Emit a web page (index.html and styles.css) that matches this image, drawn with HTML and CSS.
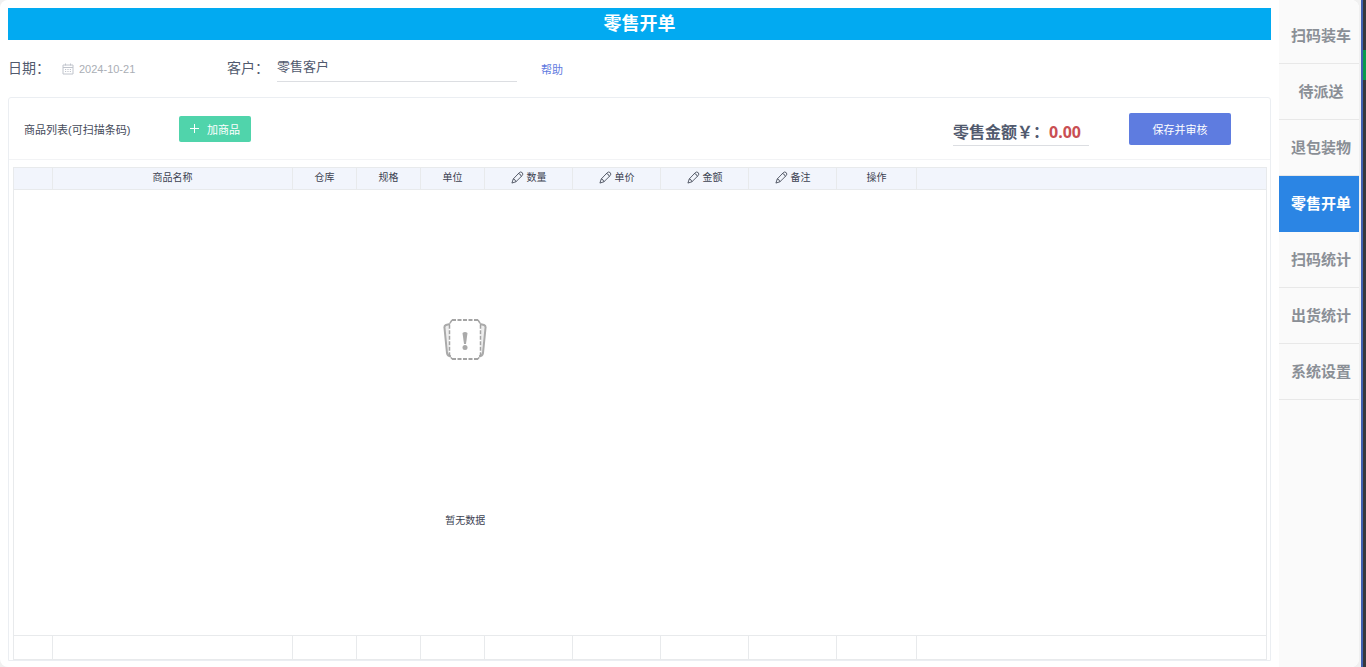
FILE: index.html
```html
<!DOCTYPE html>
<html lang="zh-CN">
<head>
<meta charset="utf-8">
<title>零售开单</title>
<link rel="stylesheet" href="styles.css">
</head>
<body>
<svg class="defs" width="0" height="0" aria-hidden="true">
  <symbol id="pen" viewBox="0 0 14 14">
    <path d="M1 13 2.400 8.600 8.800 1.900Q10.400 .3 12 1.700 13.600 3.300 12 5L5.300 11.600ZM8 2.800Q10.500 3 11 5.800M2.400 8.600Q4.800 9 5.300 11.600" fill="none" stroke="currentColor" stroke-width=".9" stroke-linejoin="round"/>
  </symbol>
</svg>
<div class="screen">
  <div class="window">
    <main class="main">
      <h1 class="title">零售开单</h1>
      <form class="filters">
        <label class="label" for="date">日期：</label>
        <span class="date-box">
          <svg width="12" height="12" viewBox="0 0 12 12" fill="none" stroke="#c0c4cc" aria-hidden="true"><path d="M1 2h10v9H1zM1 4.500h10M3.500 .5v2M8.500 .5v2"/><path d="M3 6.500h6M3 8.500h6" stroke-dasharray="1.200 1.200"/></svg>
          <input class="date" id="date" type="text" value="2024-10-21">
        </span>
        <label class="label" for="customer">客户：</label>
        <input class="customer" id="customer" type="text" value="零售客户">
        <a class="help" href="#">帮助</a>
      </form>
      <section class="card">
        <header class="card-head">
          <h2 class="card-title">商品列表(可扫描条码)</h2>
          <button class="add" type="button"><svg width="9" height="9" viewBox="0 0 9 9" stroke="#fff" aria-hidden="true"><path d="M4.500 0v9M0 4.500h9"/></svg>加商品</button>
          <div class="total">零售金额￥：<span class="amount">0.00</span></div>
          <button class="save" type="button">保存并审核</button>
        </header>
        <div class="table-wrap">
          <table class="goods">
            <colgroup>
              <col class="c-index"><col class="c-name"><col class="c-short"><col class="c-short"><col class="c-short"><col class="c-edit"><col class="c-edit"><col class="c-edit"><col class="c-edit"><col class="c-action"><col>
            </colgroup>
            <thead>
              <tr>
                <th></th><th>商品名称</th><th>仓库</th><th>规格</th><th>单位</th>
                <th><span class="edit"><svg width="13" height="13" aria-hidden="true"><use href="#pen"/></svg>数量</span></th>
                <th><span class="edit"><svg width="13" height="13" aria-hidden="true"><use href="#pen"/></svg>单价</span></th>
                <th><span class="edit"><svg width="13" height="13" aria-hidden="true"><use href="#pen"/></svg>金额</span></th>
                <th><span class="edit"><svg width="13" height="13" aria-hidden="true"><use href="#pen"/></svg>备注</span></th>
                <th>操作</th><th></th>
              </tr>
            </thead>
            <tbody>
              <tr>
                <td class="blank" colspan="10">
                  <div class="empty">
                    <svg width="44" height="44" viewBox="0 0 44 44" fill="none" aria-hidden="true">
                      <path d="M7 6 3 7Q1 8 1.500 10L4 35Q4.500 38 8 38.500M37 6 41 7Q43 8 42.500 10L40 35Q39.500 38 36 38.500" fill="#eee" stroke="#aaa" stroke-width="2"/>
                      <path d="M9 2H35V5L38 8V36L35 38V41H9V38L6 36V8L9 5Z" fill="#fff"/>
                      <path d="M9 2H35M9 41H35" stroke="#a4a4a4" stroke-width="2" stroke-dasharray="4 1.500"/>
                      <path d="M9 2 6.500 6V37L9 41M35 2 37.500 6V37L35 41" stroke="#a4a4a4" stroke-width="1.500" stroke-dasharray="4 1.500"/>
                      <path d="M19.500 15Q22 13 24.500 15L23 26H21Z" fill="#aaa"/>
                      <circle cx="22" cy="29.500" r="2.500" fill="#aaa"/>
                    </svg>
                    <span>暂无数据</span>
                  </div>
                </td>
                <td class="blank"></td>
              </tr>
            </tbody>
            <tfoot>
              <tr><td></td><td></td><td></td><td></td><td></td><td></td><td></td><td></td><td></td><td></td><td></td></tr>
            </tfoot>
          </table>
        </div>
      </section>
    </main>
    <nav class="nav">
      <a class="nav-item" href="#">扫码装车</a>
      <a class="nav-item" href="#">待派送</a>
      <a class="nav-item" href="#">退包装物</a>
      <a class="nav-item active" href="#" aria-current="page">零售开单</a>
      <a class="nav-item" href="#">扫码统计</a>
      <a class="nav-item" href="#">出货统计</a>
      <a class="nav-item" href="#">系统设置</a>
    </nav>
  </div>
  <div class="edge"><span class="edge-mark"></span></div>
</div>
</body>
</html>
```
FILE: styles.css
```css
* { box-sizing: border-box; }
body {
  margin: 0;
  background: #f0f0f0;
  color: #515a6e;
  font-family: "Liberation Sans", "Noto Sans CJK SC", sans-serif;
  font-size: 11px;
}
h1, h2 { margin: 0; }
button, input { font: inherit; color: inherit; border: 0; padding: 0; background: none; }
a { text-decoration: none; }
svg { flex: none; }
.defs { position: absolute; }
.screen { display: flex; gap: 2px; min-height: 100vh; }
.window {
  display: flex;
  flex: 1;
  min-width: 0;
  background: #fff;
  border-radius: 8px;
  overflow: hidden;
}
.main { display: flex; flex-direction: column; flex: 1; min-width: 0; padding: 8px 8px 6px; }
.title {
  background: #02aaf1;
  color: #fff;
  font-size: 18px;
  line-height: 32px;
  text-align: center;
}
.filters { display: flex; align-items: center; height: 57px; padding-bottom: 4px; }
.label { font-size: 14px; flex: none; }
.date-box { display: flex; align-items: center; gap: 5px; width: 177px; padding: 4px 0 0 12px; color: #aaaeb5; }
.date { width: 120px; font-size: 11px; }
.customer {
  width: 240px;
  height: 30px;
  margin: 0 24px 0 8px;
  padding-bottom: 2px;
  font-size: 13px;
  border-bottom: 1px solid #dcdee2;
}
.help { padding-top: 4px; color: #5f7be0; }
.card {
  display: flex;
  flex-direction: column;
  flex: 1;
  border: 1px solid #ebeef2;
  border-radius: 3px 3px 0 0;
}
.card-head {
  display: flex;
  align-items: center;
  height: 62px;
  padding: 0 39px 0 15px;
  border-bottom: 1px solid #f2f3f5;
}
.card-title { width: 155px; font-size: 11px; font-weight: 400; color: #464c5b; }
.add {
  display: flex;
  align-items: center;
  justify-content: center;
  gap: 8px;
  width: 72px;
  height: 26px;
  border-radius: 2px;
  background: #50d4ab;
  color: #fff;
}
.total {
  margin: 8px 40px 0 auto;
  width: 136px;
  white-space: nowrap;
  font-size: 16px;
  font-weight: 700;
  line-height: 24px;
  border-bottom: 1px solid #dcdee2;
}
.amount { color: #c94f53; font-family: "Noto Sans", sans-serif; }
.save {
  width: 102px;
  height: 32px;
  border-radius: 2px;
  background: #5e7ce0;
  color: #fff;
}
.table-wrap { display: grid; flex: 1; padding: 7px 3px 0 4px; }
.goods {
  width: 100%;
  height: 100%;
  table-layout: fixed;
  border-collapse: collapse;
  font-size: 10px;
  color: #3c4251;
}
.goods th, .goods td { padding: 0; border: 1px solid #e8eaec; }
.goods th { height: 22px; padding-bottom: 2px; background: #f2f5fc; font-weight: 400; line-height: 14px; }
.goods .blank { border-left-style: none; border-right-style: none; }
.goods .blank:first-child { border-left-style: solid; }
.goods .blank:last-child { border-right-style: solid; }
.goods tfoot td { height: 24px; }
.c-index { width: 39px; }
.c-name { width: 240px; }
.c-short { width: 64px; }
.c-edit { width: 88px; }
.c-action { width: 80px; }
.edit { display: flex; align-items: center; justify-content: center; gap: 3px; }
.empty { display: flex; flex-direction: column; align-items: center; gap: 150px; padding-top: 20px; }
.nav { width: 80px; background: #fafafa; flex: none; padding-top: 8px; }
.nav-item {
  display: block;
  height: 56px;
  padding-left: 4px;
  border-bottom: 1px solid #e8e8e8;
  color: #8a8f96;
  font-size: 15px;
  font-weight: 700;
  line-height: 55px;
  text-align: center;
}
.nav-item.active { background: #2b85e4; border-color: #2b85e4; color: #fff; }
.edge { width: 5px; background: #36383c; border-left: 2px solid #4060b0; padding-top: 50px; }
.edge-mark { display: block; height: 30px; background: #079a4c; }
```
